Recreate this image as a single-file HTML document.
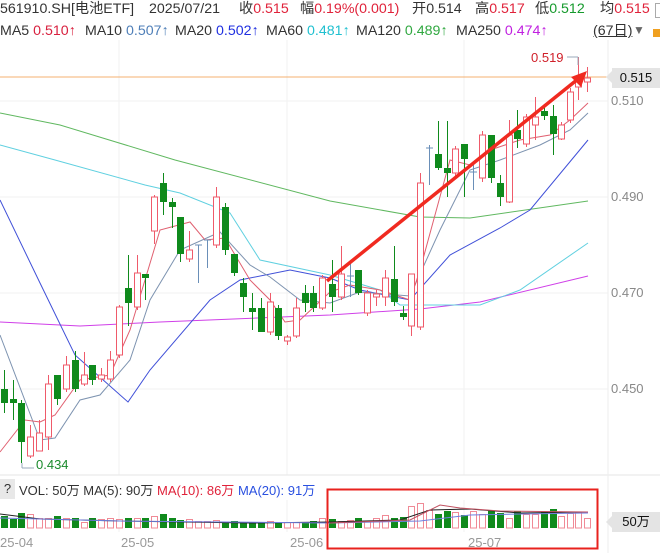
<!DOCTYPE html>
<html><head><meta charset="utf-8"><style>
*{margin:0;padding:0}
body{width:660px;height:553px;overflow:hidden;background:#fff;font-family:"Liberation Sans","Noto Sans CJK SC",sans-serif;position:relative}
.t{position:absolute;white-space:nowrap;font-size:13px;color:#333}
.h{position:absolute;white-space:nowrap;font-size:14.2px;color:#333;line-height:17px}
.r{color:#e0223a}.g{color:#159a2c}
</style></head><body>
<div class="h" style="left:0;top:1px">561910.SH[电池ETF]</div>
<div class="h" style="left:149px;top:1px">2025/07/21</div>
<div class="h" style="left:239px;top:1px">收<span class="r">0.515</span></div>
<div class="h" style="left:300px;top:1px">幅<span class="r">0.19%(0.001)</span></div>
<div class="h" style="left:412px;top:1px">开0.514</div>
<div class="h" style="left:475px;top:1px">高<span class="r">0.517</span></div>
<div class="h" style="left:535px;top:1px">低<span class="g">0.512</span></div>
<div class="h" style="left:600px;top:1px">均<span class="r">0.515</span></div>
<div class="h" style="left:0;top:23px">MA5 <span style="color:#d8203e">0.510↑</span></div>
<div class="h" style="left:85px;top:23px">MA10 <span style="color:#4f7fb8">0.507↑</span></div>
<div class="h" style="left:175px;top:23px">MA20 <span style="color:#2030e0">0.502↑</span></div>
<div class="h" style="left:266px;top:23px">MA60 <span style="color:#20c0d0">0.481↑</span></div>
<div class="h" style="left:356px;top:23px">MA120 <span style="color:#30a840">0.489↑</span></div>
<div class="h" style="left:456px;top:23px">MA250 <span style="color:#c020e0">0.474↑</span></div>
<div class="h" style="left:593px;top:23px;text-decoration:underline">(67日)</div>
<div class="t" style="left:633px;top:23px;color:#666;font-size:12px">▼</div>
<div style="position:absolute;left:653px;top:29px;width:7px;height:8px;background:#f0a020"></div>
<div style="position:absolute;left:655px;top:3px;width:8px;height:13px;border:1px solid #aaa"></div>
<svg width="660" height="553" style="position:absolute;left:0;top:0" id="s"></svg>
<div class="t" style="left:0;top:479px;width:15px;height:20px;background:#e8e8e8;text-align:center;line-height:20px">?</div>
<div class="t" style="left:19px;top:480px;font-size:13px">VOL: 50万 MA(5): 90万 <span style="color:#e0223a">MA(10): 86万</span> <span style="color:#2a50e0">MA(20): 91万</span></div>
<div class="t" style="left:0;top:535px;color:#999;font-size:13px">25-04</div>
<div class="t" style="left:121px;top:535px;color:#999;font-size:13px">25-05</div>
<div class="t" style="left:290px;top:535px;color:#999;font-size:13px">25-06</div>
<div class="t" style="left:468px;top:535px;color:#999;font-size:13px">25-07</div>
<div class="t" style="left:611px;top:93px;color:#888;font-size:13px">0.510</div>
<div class="t" style="left:611px;top:189px;color:#888;font-size:13px">0.490</div>
<div class="t" style="left:611px;top:285px;color:#888;font-size:13px">0.470</div>
<div class="t" style="left:611px;top:381px;color:#888;font-size:13px">0.450</div>
<div class="t" style="left:612px;top:68px;width:48px;height:20px;background:#e4e4e4;color:#111;line-height:20px;text-align:center">0.515</div>
<div class="t" style="left:612px;top:512px;width:48px;height:20px;background:#e4e4e4;color:#111;line-height:20px;text-align:center">50万</div>
<div class="t" style="left:531px;top:50px;color:#d0202a;font-size:13px">0.519</div>
<div class="t" style="left:36px;top:457px;color:#1a8a2c;font-size:13px">0.434</div>
<script>
var s=document.getElementById('s'),h='';
function L(x1,y1,x2,y2,c,w){h+='<line x1="'+x1+'" y1="'+y1+'" x2="'+x2+'" y2="'+y2+'" stroke="'+c+'" stroke-width="'+(w||1)+'"/>';}
function P(pts,c,w){h+='<polyline fill="none" stroke="'+c+'" stroke-width="'+(w||1)+'" points="'+pts+'"/>';}
[119,287,464].forEach(function(x){L(x,40,x,475,'#f0f0f0');L(x,500,x,532,'#f0f0f0');});
[101,197,293,389].forEach(function(y){L(0,y,608,y,'#f2f2f2');});
L(0,475,660,475,'#e6e6e6');L(608,40,608,553,'#eee');
L(0,77,612,77,'#f5b070');
h+='<polygon points="612,71 606,77 612,83" fill="#e4e4e4"/><polygon points="612,516 606,522 612,528" fill="#e4e4e4"/>';
P('0,322 80,326 160,322 330,315 420,309 480,302 588,276','#d040e8');
P('0,113 60,125 175,160 330,201 420,217 470,218 588,201','#60b860');
P('0,145 55,160 145,185 180,193 230,213 260,260 330,275 380,290 400,305 480,305 520,290 588,243','#60d0e0');
P('0,200 40,283 75,355 128,402 150,370 210,300 240,280 290,270 330,278 360,290 410,300 450,255 500,228 530,210 588,140','#4050d8');
P('0,335 40,440 55,438 80,400 100,395 130,360 150,300 180,250 220,232 250,265 270,277 300,300 330,303 360,292 410,296 440,230 470,170 500,160 540,145 570,130 588,113','#7d93b0');
P('0,452 25,420 40,422 55,415 80,380 110,375 130,330 160,230 190,222 205,240 225,238 250,280 270,300 285,322 300,320 330,292 350,285 380,290 410,300 420,270 450,160 470,165 490,150 520,140 550,135 570,120 588,103','#e06070');
var C=[[4,389,403,'g',370,413],[13,399,403,'g',380,420],[21,403,442,'g',400,463],[30,437,456,'r',425,458],[39,433,451,'r',420,451],[48,384,437,'r',375,450],[57,375,399,'g',375,405],[66,365,389,'r',356,392],[75,360,389,'g',351,392],[84,375,384,'r',352,386],[92,365,380,'g',365,385],[101,375,379,'r',368,382],[110,360,379,'r',351,382],[119,307,355,'r',305,358],[128,288,303,'g',255,326],[137,273,307,'r',255,310],[145,274,278,'g',274,300],[154,197,231,'r',195,244],[163,183,202,'g',173,215],[172,202,207,'g',198,228],[180,217,254,'g',217,262],[189,250,259,'r',231,262],[198,245,247,'b',245,283],[207,240,242,'b',240,268],[216,197,245,'r',187,248],[225,207,250,'g',203,255],[234,254,273,'g',254,276],[243,283,297,'g',278,312],[252,308,312,'g',293,330],[261,308,332,'g',298,332],[270,302,332,'r',293,335],[278,308,336,'g',305,340],[287,337,341,'r',335,345],[296,308,336,'r',298,338],[305,293,303,'g',285,312],[313,293,308,'g',286,312],[322,278,308,'r',275,310],[332,284,297,'g',260,312],[341,274,297,'r',246,300],[350,276,278,'b',260,297],[358,270,293,'g',270,295],[367,293,313,'r',290,316],[376,294,297,'r',290,306],[385,278,297,'r',270,306],[394,279,302,'g',246,306],[403,313,317,'g',306,320],[411,274,326,'r',274,336],[420,183,327,'r',173,330],[429,148,150,'b',145,185],[438,154,168,'g',121,170],[447,168,173,'g',121,197],[455,149,173,'r',146,176],[464,144,159,'g',144,197],[473,172,174,'b',165,190],[482,135,178,'r',131,182],[491,135,178,'g',135,183],[500,183,197,'g',175,206],[509,135,202,'r',120,203],[517,130,139,'g',110,148],[526,117,144,'r',114,147],[535,117,125,'r',97,140],[544,111,116,'g',105,120],[553,116,134,'g',105,155],[561,125,139,'r',122,140],[570,92,120,'r',88,123],[578,78,87,'r',57,100],[587,78,82,'r',67,92]];
var vh=[12,9,15,14,10,10,12,10,10,6,10,9,10,9,10,10,10,12,14,10,8,9,7,7,8,6,7,6,6,6,7,6,6,6,6,7,10,9,7,8,10,7,10,13,10,11,22,25,18,14,17,16,13,17,14,17,15,10,17,14,14,16,19,12,15,16,10];
var base=528;
C.forEach(function(c,i){
 var col=c[3]=='g'?'#0f8a1c':(c[3]=='r'?'#ef5a6a':'#6a8fb8');
 L(c[0]+.5,c[4],c[0]+.5,c[5],col);
 if(c[3]=='g')h+='<rect x="'+(c[0]-3)+'" y="'+c[1]+'" width="7" height="'+Math.max(2,c[2]-c[1])+'" fill="'+col+'"/>';
 else if(c[3]=='r')h+='<rect x="'+(c[0]-2.5)+'" y="'+c[1]+'" width="6" height="'+Math.max(2,c[2]-c[1])+'" fill="#fff" stroke="'+col+'"/>';
 else L(c[0]-3,c[1],c[0]+4,c[1],col);
 var v=vh[i]||10;
 if(c[3]=='g')h+='<rect x="'+(c[0]-3)+'" y="'+(base-v)+'" width="7" height="'+v+'" fill="#0f8a1c"/>';
 else h+='<rect x="'+(c[0]-2.5)+'" y="'+(base-v+.5)+'" width="6" height="'+(v-.5)+'" fill="#fff" stroke="#f08a96"/>';
});
P('0,514 40,519 120,521 250,523 330,522 400,520 430,510 470,509 520,513 588,512','#222');
P('0,518 120,521 330,523 420,521 470,515 520,514 588,513','#7080e0');
P('330,523 410,520 440,505 460,508 500,511 588,512','#c05060');
L(327,281,578,79,'#f02a20',3.5);
h+='<polygon points="587,71 571,77 581,87" fill="#f02a20"/>';
L(567,57,578,57,'#9ab');L(578,57,578,65,'#9ab');
L(22,463,22,468,'#9ab');L(22,468,34,468,'#9ab');
h+='<rect x="327.5" y="489.5" width="270" height="59" fill="none" stroke="#e8221e" stroke-width="2"/>';
s.innerHTML=h;
</script>
</body></html>
